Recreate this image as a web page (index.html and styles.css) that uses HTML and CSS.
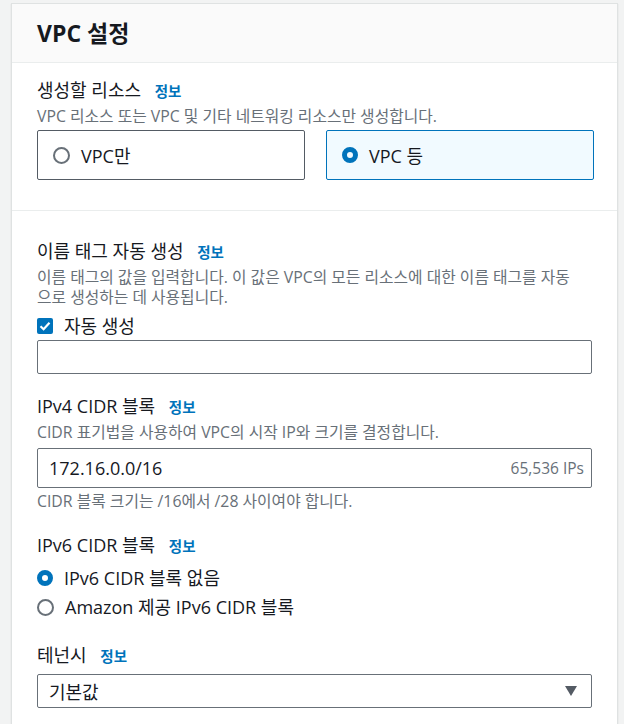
FILE: index.html
```html
<!DOCTYPE html>
<html lang="ko">
<head>
    <meta charset="UTF-8">
    <meta name="viewport" content="width=device-width, initial-scale=1.0">
    <title>VPC 설정</title>
    <link rel="stylesheet" href="styles.css">
</head>
<body>
    <div class="page">
        <div class="card">
            <div class="card-header">
                <h2>VPC 설정</h2>
            </div>

            <div class="section">
                <div class="label">생성할 리소스 <a href="#" class="info">정보</a></div>
                <div class="desc">VPC 리소스 또는 VPC 및 기타 네트워킹 리소스만 생성합니다.</div>
                <div class="tiles">
                    <div class="tile">
                        <span class="radio"></span>
                        <span>VPC만</span>
                    </div>
                    <div class="tile selected">
                        <span class="radio checked"></span>
                        <span>VPC 등</span>
                    </div>
                </div>
            </div>

            <div class="section last">
                <div class="field">
                    <div class="label">이름 태그 자동 생성 <a href="#" class="info">정보</a></div>
                    <div class="desc">이름 태그의 값을 입력합니다. 이 값은 VPC의 모든 리소스에 대한 이름 태그를 자동<br>으로 생성하는 데 사용됩니다.</div>
                    <div class="check-row">
                        <span class="checkbox">
                            <svg width="12" height="10" viewBox="0 0 12 10"><path d="M1.5 5.2 L4.6 8.2 L10.5 1.8" fill="none" stroke="#fff" stroke-width="2.2"/></svg>
                        </span>
                        <span>자동 생성</span>
                    </div>
                    <div class="input"></div>
                </div>

                <div class="field ipv4">
                    <div class="label">IPv4 CIDR 블록 <a href="#" class="info">정보</a></div>
                    <div class="desc">CIDR 표기법을 사용하여 VPC의 시작 IP와 크기를 결정합니다.</div>
                    <div class="input tall">
                        <span>172.16.0.0/16</span>
                        <span class="suffix">65,536 IPs</span>
                    </div>
                    <div class="help">CIDR 블록 크기는 /16에서 /28 사이여야 합니다.</div>
                </div>

                <div class="field ipv6">
                    <div class="label">IPv6 CIDR 블록 <a href="#" class="info">정보</a></div>
                    <div class="radio-list">
                        <div class="radio-row">
                            <span class="radio checked"></span>
                            <span>IPv6 CIDR 블록 없음</span>
                        </div>
                        <div class="radio-row">
                            <span class="radio"></span>
                            <span>Amazon 제공 IPv6 CIDR 블록</span>
                        </div>
                    </div>
                </div>

                <div class="field tenancy">
                    <div class="label">테넌시 <a href="#" class="info">정보</a></div>
                    <div class="input select">
                        <span>기본값</span>
                        <span class="caret"></span>
                    </div>
                </div>
            </div>
        </div>
    </div>
</body>
</html>
```

FILE: styles.css
```css
body {
    margin: 0;
    background-color: #f2f3f3;
    font-family: "Open Sans", "Noto Sans CJK KR", sans-serif;
    color: #16191f;
}
.page {
    padding: 3px 6px 0 11px;
}
.card {
    background-color: #fff;
    border: 1px solid #dfe2e2;
    border-bottom: none;
    box-shadow: 0 1px 1px rgba(0, 28, 36, 0.15);
}
.card-header {
    height: 58px;
    background-color: #fafafa;
    border-bottom: 1px solid #eaeded;
    padding: 0 25px;
    display: flex;
    align-items: center;
}
.card-header h2 {
    margin: 0;
    font-size: 23px;
    font-weight: 700;
    line-height: 28px;
}
.section {
    padding: 15px 23px 30px 25px;
    border-bottom: 1px solid #eaeded;
}
.section.last {
    border-bottom: none;
    padding-top: 28px;
    padding-right: 25px;
    padding-bottom: 20px;
}
.label {
    font-size: 18px;
    line-height: 24px;
}
.info {
    color: #0073bb;
    font-size: 14.5px;
    font-weight: 700;
    line-height: 1;
    text-decoration: none;
    margin-left: 9px;
}
.desc,
.help {
    font-size: 15.8px;
    line-height: 20px;
    color: #687078;
}
.desc {
    margin-top: 4px;
}
.tiles {
    display: grid;
    grid-template-columns: 1fr 1fr;
    gap: 21px;
    margin-top: 4px;
}
.tile {
    height: 48px;
    border: 1px solid #545b64;
    border-radius: 2px;
    display: flex;
    align-items: center;
    gap: 11px;
    padding-left: 15px;
    font-size: 18px;
}
.tile.selected {
    background-color: #f1faff;
    border-color: #0073bb;
}
.radio {
    width: 13px;
    height: 13px;
    border: 2px solid #687078;
    border-radius: 50%;
    flex-shrink: 0;
}
.radio.checked {
    width: 6px;
    height: 6px;
    border: 5px solid #0073bb;
}
.check-row,
.radio-row {
    display: flex;
    align-items: center;
    gap: 11px;
    font-size: 18px;
    line-height: 24px;
}
.check-row {
    margin-top: 7px;
}
.checkbox {
    width: 16px;
    height: 16px;
    border-radius: 2px;
    background-color: #0073bb;
    display: flex;
    align-items: center;
    justify-content: center;
}
.input {
    height: 32px;
    border: 1px solid #687078;
    border-radius: 2px;
    margin-top: 2px;
    display: flex;
    align-items: center;
    justify-content: space-between;
    padding: 0 7px 0 11px;
    font-size: 18px;
}
.input.tall {
    height: 38px;
    margin-top: 6px;
}
.suffix {
    font-size: 15.5px;
    color: #687078;
}
.help {
    margin-top: 3px;
}
.ipv4 {
    margin-top: 20px;
}
.ipv6 {
    margin-top: 22px;
}
.radio-list {
    margin-top: 9px;
    display: flex;
    flex-direction: column;
    gap: 5px;
}
.tenancy {
    margin-top: 24px;
}
.select {
    margin-top: 7px;
    padding-right: 14px;
}
.caret {
    width: 0;
    height: 0;
    border-left: 6px solid transparent;
    border-right: 6px solid transparent;
    border-top: 10px solid #545b64;
}
```
